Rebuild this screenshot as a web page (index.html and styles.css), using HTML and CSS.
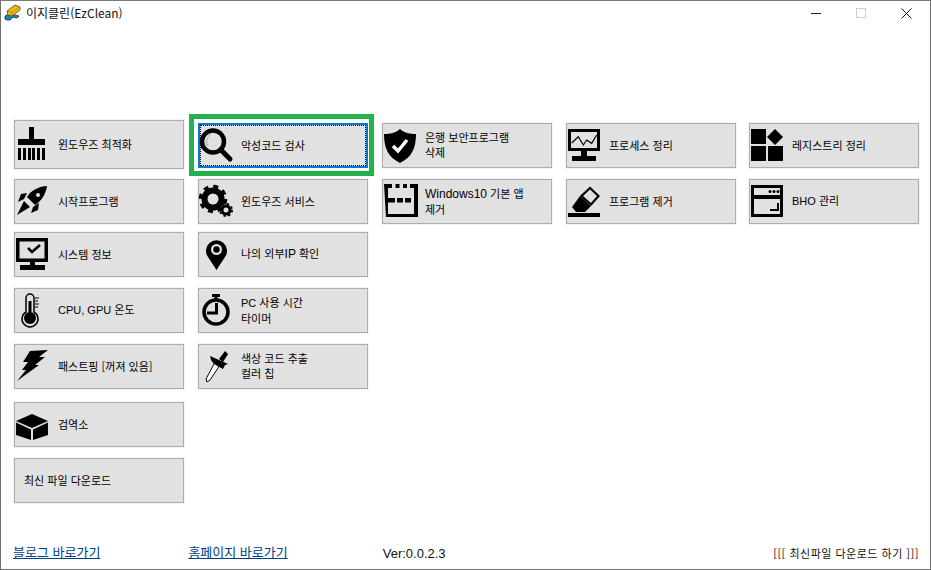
FILE: index.html
```html
<!DOCTYPE html>
<html lang="ko">
<head>
    <meta charset="UTF-8">
    <title>이지클린(EzClean)</title>
    <link rel="stylesheet" href="styles.css">
</head>
<body>
    <div class="window">
        <!-- Title bar -->
        <div class="titlebar">
            <svg class="app-icon" viewBox="0 0 17 17">
                <path d="M1 12 L5 10 L11 11 L15 12 L13 14 L9 13 L6 16 L3 16 L1 15 Z" fill="#1b86ad" stroke="#12303c" stroke-width=".8"/>
                <path d="M3 7 L11 1 L16 3 L16 6 L8 12 L4 11 Z" fill="#f2b91d" stroke="#5a4310" stroke-width=".8"/>
                <path d="M4 7 L8 8.5 L15 3.5 M8 8.5 L8 11" fill="none" stroke="#a87c10" stroke-width=".7"/>
            </svg>
            <span class="app-title">이지클린(EzClean)</span>
            <div class="win-controls">
                <span class="win-min"></span>
                <span class="win-max"></span>
                <svg class="win-close" viewBox="0 0 11 11"><path d="M.5 .5 L10.5 10.5 M10.5 .5 L.5 10.5" stroke="#111" stroke-width="1"/></svg>
            </div>
        </div>

        <!-- Buttons -->
        <div class="menu">
            <div class="row row-1">
                <button class="btn btn-tall">
                    <svg class="icon" viewBox="0 0 35 35">
                        <rect x="11" y="0" width="5" height="12"/>
                        <rect x="0" y="12" width="27" height="6"/>
                        <path d="M0 21h3v12h-3z M5 21h3v12h-3z M10 21h3v12h-3z M14 21h3v12h-3z M19 21h3v12h-3z M24 21h3v12h-3z"/>
                    </svg>
                    <span>윈도우즈 최적화</span>
                </button>
                <div class="focus-ring">
                    <button class="btn btn-focus">
                        <svg class="icon" viewBox="0 0 35 35">
                            <circle cx="11" cy="13.5" r="11" fill="none" stroke="#000" stroke-width="4.5"/>
                            <path d="M19 22 L28 31" stroke="#000" stroke-width="5" stroke-linecap="round"/>
                            <path d="M6 18 A8 8 0 0 1 8 7" fill="none" stroke="#aaa" stroke-width="1"/>
                        </svg>
                        <span>악성코드 검사</span>
                    </button>
                </div>
                <button class="btn">
                    <svg class="icon" viewBox="0 0 35 35">
                        <path d="M14 1 C18 5 24 6 30 6 C30 20 26 29 14 35 C2 29 -2 20 -2 6 C4 6 10 5 14 1 Z"/>
                        <path d="M7 18 L12 23 L21 12" fill="none" stroke="#fff" stroke-width="3.5"/>
                    </svg>
                    <span>은행 보안프로그램<br>삭제</span>
                </button>
                <button class="btn">
                    <svg class="icon" viewBox="0 0 35 35">
                        <rect x="-.5" y="2.5" width="29" height="19" fill="none" stroke="#000" stroke-width="3"/>
                        <path d="M1.7 15 L8.3 8.7 L13.3 17 L16.7 12 L21.7 15.3 L26.7 7" fill="none" stroke="#000" stroke-width="1.2"/>
                        <rect x="11" y="23" width="6" height="6"/>
                        <rect x="2" y="28" width="24" height="5"/>
                    </svg>
                    <span>프로세스 정리</span>
                </button>
                <button class="btn btn-last">
                    <svg class="icon" viewBox="0 0 35 35">
                        <rect x="-2" y="1" width="15" height="15"/>
                        <path d="M22 1 L30 9 L22 17 L14 9 Z"/>
                        <rect x="-2" y="18" width="15" height="15"/>
                        <rect x="15" y="18" width="15" height="15"/>
                    </svg>
                    <span>레지스트리 정리</span>
                </button>
            </div>

            <div class="row row-2">
                <button class="btn">
                    <svg class="icon" viewBox="0 0 35 35">
                        <path d="M29 2 C22 2 13 6 9 13 L17 21 C24 17 28 9 29 2 Z"/>
                        <path d="M9 9 L3 10 L0 18 L6 15 Z"/>
                        <path d="M21 19 L20 26 L13 29 L15 23 Z"/>
                        <path d="M6 17 L12 23 L-1 31 Z"/>
                        <circle cx="20" cy="11" r="2" fill="#e1e1e1"/>
                    </svg>
                    <span>시작프로그램</span>
                </button>
                <button class="btn">
                    <svg class="icon" viewBox="0 0 35 35">
                        <circle cx="11" cy="15" r="8.5" fill="none" stroke="#000" stroke-width="6"/>
                        <circle cx="11" cy="15" r="12.5" fill="none" stroke="#000" stroke-width="3.5" stroke-dasharray="4.9 4.9"/>
                        <circle cx="24" cy="26" r="4" fill="none" stroke="#000" stroke-width="3"/>
                        <circle cx="24" cy="26" r="6" fill="none" stroke="#000" stroke-width="2" stroke-dasharray="2.36 2.36"/>
                    </svg>
                    <span>윈도우즈 서비스</span>
                </button>
                <button class="btn">
                    <svg class="icon" viewBox="0 0 35 35">
                        <path d="M-2 0h8v4h-4v26h26v-26h-4v-4h8v33h-32z"/>
                        <path d="M9.5 0h4v4h-4z M17 0h4v4h-4z"/>
                        <path d="M2 14h7v4.5h-7z M11 14h6v4.5h-6z M19 14h6v4.5h-6z"/>
                    </svg>
                    <span><span class="latin">Windows10</span> 기본 앱<br>제거</span>
                </button>
                <button class="btn">
                    <svg class="icon" viewBox="0 0 35 35">
                        <rect x="-2" y="29" width="32" height="4"/>
                        <path d="M10 12 L21 22 L15 28 L6 28 L2 23 Z"/>
                        <path d="M20 4 L28.5 12 L21 20.5 L11.5 12 Z" fill="none" stroke="#000" stroke-width="2.2"/>
                    </svg>
                    <span>프로그램 제거</span>
                </button>
                <button class="btn btn-last">
                    <svg class="icon" viewBox="0 0 35 35">
                        <path d="M-2 1h32v32h-32z M1 4v7h26v-7z M1 15v15h26v-15z" fill-rule="evenodd"/>
                        <circle cx="17" cy="7.5" r="1.5"/>
                        <circle cx="21" cy="7.5" r="1.5"/>
                        <circle cx="25" cy="7.5" r="1.5"/>
                        <path d="M24 19h2v8h-9v-2h7z"/>
                    </svg>
                    <span><span class="latin-sm">BHO</span> 관리</span>
                </button>
            </div>

            <div class="row row-3">
                <button class="btn">
                    <svg class="icon" viewBox="0 0 35 35">
                        <path d="M-2 1h32v24h-32z M1.5 4.5v17h25v-17z" fill-rule="evenodd"/>
                        <path d="M10 11 L14 15 L22 8" fill="none" stroke="#000" stroke-width="2.5"/>
                        <rect x="12" y="25" width="5" height="4"/>
                        <rect x="2" y="28" width="25" height="5"/>
                    </svg>
                    <span>시스템 정보</span>
                </button>
                <button class="btn">
                    <svg class="icon" viewBox="0 0 35 35">
                        <path d="M14.5 33 L6 20 A10.5 10.5 0 1 1 23 20 Z"/>
                        <circle cx="14.5" cy="12.5" r="5.5" fill="#e1e1e1"/>
                        <circle cx="14.5" cy="12.5" r="3.2"/>
                    </svg>
                    <span>나의 외부<span class="latin">IP</span> 확인</span>
                </button>
            </div>

            <div class="row row-4">
                <button class="btn">
                    <svg class="icon" viewBox="0 0 35 35">
                        <path d="M8 19 V5 A4 4 0 0 1 16 5 V19 A8 8 0 1 1 8 19 Z" fill="none" stroke="#000" stroke-width="1.5"/>
                        <circle cx="12" cy="25" r="6"/>
                        <rect x="10.5" y="8" width="3" height="14"/>
                        <path d="M17 5h4 M17 8h3 M17 11h4 M17 14h3" stroke="#000" stroke-width="1"/>
                    </svg>
                    <span><span class="latin-sm">CPU, GPU</span> 온도</span>
                </button>
                <button class="btn">
                    <svg class="icon" viewBox="0 0 35 35">
                        <rect x="10" y="1" width="8" height="3"/>
                        <rect x="12.5" y="3" width="3" height="3"/>
                        <circle cx="14" cy="19" r="12" fill="none" stroke="#000" stroke-width="3.5"/>
                        <path d="M14.5 10 V20 H5" fill="none" stroke="#000" stroke-width="3"/>
                    </svg>
                    <span><span class="latin-sm">PC</span> 사용 시간<br>타이머</span>
                </button>
            </div>

            <div class="row row-5">
                <button class="btn">
                    <svg class="icon" viewBox="0 0 35 35">
                        <path d="M12 2 L30 1 L21 8 L27 8 L17 16 L21 16 L-1 32 L8 21 L4 21 L10 13 L5 13 Z"/>
                    </svg>
                    <span>패스트핑 [꺼져 있음]</span>
                </button>
                <button class="btn">
                    <svg class="icon" viewBox="0 0 35 35">
                        <path d="M13 13 L4 30 L5 33 L8 31 L18 16" fill="#fff" stroke="#000" stroke-width="1"/>
                        <path d="M8 7 L26 15 L23 16 L21 20 L12 15 L9 11 Z"/>
                        <path d="M17 10 L23 2 L26 5 L21 13 Z"/>
                    </svg>
                    <span>색상 코드 추출<br>컬러 칩</span>
                </button>
            </div>

            <div class="row row-6">
                <button class="btn">
                    <svg class="icon" viewBox="0 0 35 35">
                        <path d="M14 7 L30 14 L14 21 L-2 14 Z"/>
                        <path d="M-2 15.5 L13 22.5 V33 L-2 28 Z"/>
                        <path d="M30 15.5 L15 22.5 V33 L30 28 Z"/>
                    </svg>
                    <span>검역소</span>
                </button>
            </div>

            <div class="row row-7">
                <button class="btn btn-text">
                    <span>최신 파일 다운로드</span>
                </button>
            </div>
        </div>

        <!-- Footer -->
        <div class="footer">
            <a class="link link-blog" href="#">블로그 바로가기</a>
            <a class="link link-home" href="#">홈페이지 바로가기</a>
            <span class="version">Ver:0.0.2.3</span>
            <span class="update">[[[ 최신파일 다운로드 하기 ]]]</span>
        </div>
    </div>
</body>
</html>
```

FILE: styles.css
```css
* {
    margin: 0;
    padding: 0;
    box-sizing: border-box;
}

html, body {
    width: 931px;
    height: 570px;
    overflow: hidden;
    background-color: #fff;
}

body {
    font-family: "Noto Sans CJK KR", "Liberation Sans", sans-serif;
    font-size: 11px;
    color: #000;
}

.latin {
    font-family: "Liberation Sans", sans-serif;
    font-size: 12px;
}

.latin-sm {
    font-family: "Liberation Sans", sans-serif;
    font-size: 11px;
}

.window {
    width: 931px;
    height: 570px;
    display: flex;
    flex-direction: column;
    border: 1px solid #6f6f6f;
    border-top-color: #7a7a7a;
    background-color: #fff;
}

/* Title bar */
.titlebar {
    height: 29px;
    flex: none;
    display: flex;
    align-items: flex-start;
    padding: 3px 0 0 3px;
}

.app-icon {
    width: 17px;
    height: 17px;
}

.app-title {
    margin-left: 5px;
    font-size: 12px;
    line-height: 17px;
    color: #111;
}

.win-controls {
    margin-left: auto;
    display: flex;
    align-items: flex-start;
}

.win-min {
    width: 10px;
    height: 1px;
    margin-top: 9px;
    background-color: #222;
}

.win-max {
    width: 10px;
    height: 10px;
    margin: 4px 0 0 35px;
    border: 1px solid #ccc;
}

.win-close {
    width: 11px;
    height: 11px;
    margin: 4px 18px 0 35px;
}

/* Button rows */
.menu {
    flex: none;
    padding: 90px 0 0 13px;
}

.row {
    display: flex;
    align-items: flex-start;
    gap: 14px;
}

.row-1 { height: 59px; }
.row-2 { height: 53px; }
.row-3 { height: 56px; }
.row-4 { height: 56px; }
.row-5 { height: 58px; }
.row-6 { height: 56px; }
.row-7 { height: 45px; }

.btn {
    width: 170px;
    height: 45px;
    flex: none;
    display: flex;
    align-items: center;
    font: inherit;
    text-align: left;
    line-height: 15px;
    color: #000;
    background-color: #e1e1e1;
    border: 1px solid #adadad;
    outline: 1px solid #f4f4f4;
}

.btn > span {
    margin-top: -1px;
}

.row-1 .btn {
    margin-top: 3px;
}

.row-1 .btn-tall {
    height: 49px;
    margin-top: 0;
}

.btn-last {
    margin-left: -1px;
}

.icon {
    width: 35px;
    height: 35px;
    flex: none;
    margin: 0 4px 0 3px;
    overflow: visible;
    fill: #000;
}

.row > .btn:first-child .icon {
    margin-right: 5px;
}

.btn-text {
    padding-left: 9px;
}

/* Selected button */
.focus-ring {
    width: 185px;
    height: 62px;
    flex: none;
    margin: -6px -6px 0 -9px;
    padding: 4px 5px 0 4px;
    border: 5px solid #22b14c;
    background-color: #fff;
}

.focus-ring .btn {
    margin: 0;
    border: 2px solid #0078d7;
    outline: 1px dotted #000;
    outline-offset: -3px;
}

.focus-ring .icon {
    margin-left: 2px;
}

/* Footer */
.footer {
    margin-top: auto;
    height: 30px;
    flex: none;
    display: flex;
    align-items: flex-start;
    padding: 3px 0 0 12px;
}

.link {
    font-size: 13px;
    color: #003e82;
    text-decoration: underline;
}

.link-home {
    margin-left: 88px;
}

.version {
    margin: 4px 0 0 95px;
    font-family: "Liberation Sans", sans-serif;
    font-size: 13px;
    color: #111;
}

.update {
    margin: 3px 11px 0 auto;
    letter-spacing: .5px;
    color: #111;
}
```
